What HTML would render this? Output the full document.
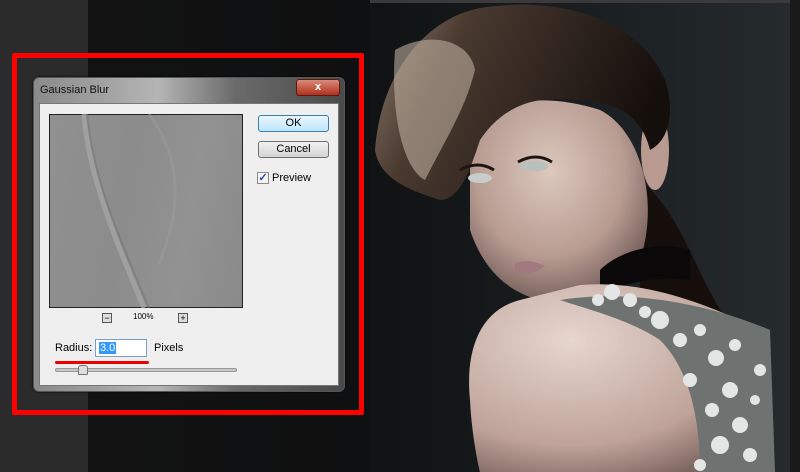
<!DOCTYPE html>
<html><head><meta charset="utf-8"><style>
*{margin:0;padding:0;box-sizing:border-box}
body{width:800px;height:472px;overflow:hidden;background:#0d0e10;position:relative;font-family:"Liberation Sans",sans-serif}
.abs{position:absolute}
</style></head><body>
<div class="abs" style="left:0;top:0;width:88px;height:472px;background:#2b2b2b"></div>
<div class="abs" style="left:88px;top:0;width:290px;height:472px;background:linear-gradient(90deg,#121212,#0f1011)"></div>
<svg class="abs" style="left:370px;top:0" width="430" height="472" viewBox="370 0 430 472">
<defs>
<linearGradient id="bg" x1="0" y1="0" x2="1" y2="0"><stop offset="0" stop-color="#101213"/><stop offset="0.5" stop-color="#1a1e20"/><stop offset="1" stop-color="#262b2d"/></linearGradient>
<radialGradient id="skin" cx="0.45" cy="0.35" r="0.7"><stop offset="0" stop-color="#dcc8be"/><stop offset="0.6" stop-color="#b89c92"/><stop offset="1" stop-color="#6a5450"/></radialGradient>
<radialGradient id="sh" cx="0.35" cy="0.3" r="0.8"><stop offset="0" stop-color="#e6d6ce"/><stop offset="0.7" stop-color="#bfa39a"/><stop offset="1" stop-color="#7e6660"/></radialGradient>
<linearGradient id="hair" x1="0" y1="0" x2="1" y2="0.3"><stop offset="0" stop-color="#8c7c6e"/><stop offset="0.3" stop-color="#4a3a30"/><stop offset="1" stop-color="#150f0c"/></linearGradient>
</defs>
<rect x="370" y="0" width="430" height="472" fill="url(#bg)"/>
<rect x="370" y="0" width="430" height="3" fill="#3a3a3a"/>
<rect x="790" y="0" width="10" height="472" fill="#1a1a1a"/>
<path d="M640 180 C690 220 700 300 745 340 C760 380 740 420 720 440 L640 420Z" fill="#150e0b"/>
<path d="M470 150 C470 100 540 90 600 110 C640 130 660 200 640 260 C620 300 580 310 540 300 C500 290 480 260 470 230Z" fill="url(#skin)"/>
<ellipse cx="655" cy="150" rx="14" ry="40" fill="#b89a90"/>
<path d="M375 150 C380 80 420 20 480 8 C560 -5 640 20 665 80 C675 110 670 140 650 150 C640 110 610 100 570 100 C530 95 500 110 480 140 C470 170 460 200 440 200 C410 190 380 180 375 150Z" fill="url(#hair)"/>
<path d="M395 50 C430 30 470 40 475 70 C465 110 445 140 425 180 C405 170 390 120 395 50Z" fill="#bcae9f" opacity="0.6"/>
<ellipse cx="480" cy="178" rx="12" ry="5" fill="#c8cccb"/>
<ellipse cx="534" cy="166" rx="14" ry="5" fill="#b8c0c0"/>
<path d="M460 170 Q478 160 494 170" stroke="#1e1512" stroke-width="3" fill="none"/>
<path d="M518 162 Q536 152 552 162" stroke="#1e1512" stroke-width="3" fill="none"/>
<path d="M515 263 Q530 258 545 266 Q530 278 515 272Z" fill="#a07a80"/>
<path d="M600 270 C620 250 660 240 690 250 L690 280 C650 275 620 285 600 295Z" fill="#0a0808"/>
<path d="M520 300 C480 310 465 350 470 400 C472 440 480 472 480 472 L700 472 L760 330 C700 300 640 280 580 285Z" fill="url(#sh)"/>
<path d="M560 300 C620 290 700 300 770 330 L775 472 L700 472 C700 420 690 370 660 340 C630 320 590 310 560 300Z" fill="#6e7270"/>
<g fill="#e4e6e5">
<circle cx="612" cy="292" r="8"/><circle cx="630" cy="300" r="7"/><circle cx="660" cy="320" r="9"/><circle cx="680" cy="340" r="7"/><circle cx="700" cy="330" r="6"/><circle cx="716" cy="358" r="8"/><circle cx="690" cy="380" r="7"/><circle cx="730" cy="390" r="8"/><circle cx="712" cy="410" r="7"/><circle cx="740" cy="425" r="8"/><circle cx="720" cy="445" r="9"/><circle cx="750" cy="455" r="7"/><circle cx="645" cy="312" r="6"/><circle cx="735" cy="345" r="6"/><circle cx="755" cy="400" r="5"/><circle cx="700" cy="465" r="6"/><circle cx="598" cy="300" r="6"/><circle cx="760" cy="370" r="6"/>
</g>
</svg>
<div class="abs" style="left:12px;top:53px;width:352px;height:362px;border:5px solid #f00;border-radius:2px"></div>
<div class="abs" style="left:33px;top:77px;width:312px;height:315px;border:1px solid #555;border-radius:6px;background:linear-gradient(90deg,#8a8a8a,#b5b5b5 40%,#6a6a6a 65%,#4a4a4a 100%);box-shadow:0 0 2px #000"></div>
<div class="abs" style="left:40px;top:84px;font-size:11px;color:#111">Gaussian Blur</div>
<div class="abs" style="left:296px;top:79px;width:44px;height:17px;border-radius:3px;background:linear-gradient(#d98a7a,#b0301c);border:1px solid #5a1a10;color:#fff;font-size:11px;font-weight:bold;text-align:center;line-height:15px">x</div>
<div class="abs" style="left:39px;top:103px;width:300px;height:283px;background:#efefef;border:1px solid #777"></div>
<div class="abs" style="left:49px;top:114px;width:194px;height:194px;border:1px solid #222;background:linear-gradient(100deg,#909090,#8c8c8c 40%,#929292 70%,#8a8a8a)"></div>
<svg class="abs" style="left:49px;top:114px" width="194" height="194"><path d="M35 0 C40 60 60 110 95 194" stroke="#a8a8a8" stroke-width="5" fill="none" opacity=".7"/><path d="M38 0 C44 60 64 110 100 194" stroke="#777" stroke-width="2" fill="none" opacity=".6"/><path d="M100 0 C130 40 135 90 110 150" stroke="#9c9c9c" stroke-width="3" fill="none" opacity=".5"/></svg>
<div class="abs" style="left:258px;top:115px;width:71px;height:17px;border:1px solid #3c7fb1;border-radius:3px;background:linear-gradient(#eaf6fd,#bee6fd);font-size:11px;text-align:center;line-height:15px;color:#000">OK</div>
<div class="abs" style="left:258px;top:141px;width:71px;height:17px;border:1px solid #707070;border-radius:3px;background:linear-gradient(#f2f2f2,#d4d4d4);font-size:11px;text-align:center;line-height:15px;color:#000">Cancel</div>
<div class="abs" style="left:257px;top:172px;width:12px;height:12px;border:1px solid #8a8a8a;background:#f4f4f4;color:#2a4a9a;font-size:11px;line-height:10px;text-align:center;font-weight:bold">✓</div>
<div class="abs" style="left:272px;top:172px;font-size:11px;color:#000">Preview</div>
<div class="abs" style="left:102px;top:313px;width:10px;height:10px;border:1px solid #555;background:#ddd;font-size:9px;line-height:8px;text-align:center">−</div>
<div class="abs" style="left:133px;top:312px;font-size:8px;color:#000">100%</div>
<div class="abs" style="left:178px;top:313px;width:10px;height:10px;border:1px solid #555;background:#ddd;font-size:9px;line-height:8px;text-align:center">+</div>
<div class="abs" style="left:55px;top:342px;font-size:11px;color:#000">Radius:</div>
<div class="abs" style="left:95px;top:339px;width:52px;height:18px;border:1px solid #7aa0c8;background:#fff"></div>
<div class="abs" style="left:99px;top:342px;font-size:11px;background:#3399ff;color:#fff;line-height:12px;padding:0 1px">3.0</div>
<div class="abs" style="left:154px;top:342px;font-size:11px;color:#000">Pixels</div>
<div class="abs" style="left:55px;top:361px;width:94px;height:3px;background:#e00;border-radius:2px"></div>
<div class="abs" style="left:55px;top:368px;width:182px;height:4px;background:#c8c8c8;border:1px solid #999;border-radius:2px"></div>
<div class="abs" style="left:78px;top:365px;width:10px;height:10px;background:#ddd;border:1px solid #777;border-radius:3px 3px 1px 1px"></div>
</body></html>
